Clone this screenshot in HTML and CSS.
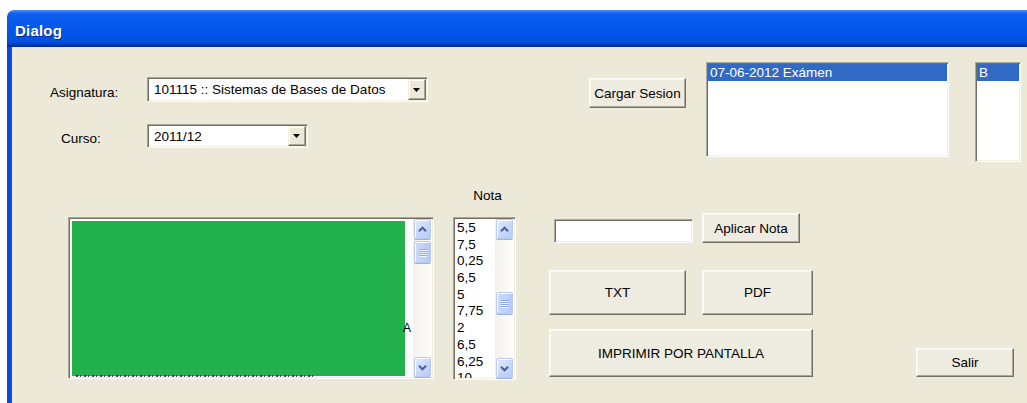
FILE: index.html
```html
<!DOCTYPE html>
<html lang="es">
<head>
<meta charset="utf-8">
<title>Dialog</title>
<link rel="stylesheet" href="styles.css">
</head>
<body>
<div class="window">
  <div class="titlebar"><span class="title">Dialog</span></div>
  <div class="client">
    <div class="top-row">
      <div class="form">
        <span class="label lbl-asig">Asignatura:</span>
        <div class="combo combo-asig">
          <span class="combo-text">101115 :: Sistemas de Bases de Datos</span>
          <span class="combo-btn"><svg width="8" height="5" viewBox="0 0 8 5"><path d="M0 0H7L3.5 4Z" fill="#000"/></svg></span>
        </div>
        <span class="label lbl-curso">Curso:</span>
        <div class="combo combo-curso">
          <span class="combo-text">2011/12</span>
          <span class="combo-btn"><svg width="8" height="5" viewBox="0 0 8 5"><path d="M0 0H7L3.5 4Z" fill="#000"/></svg></span>
        </div>
      </div>
      <button class="btn btn-cargar">Cargar Sesion</button>
      <div class="listbox list-sesiones">
        <div class="item selected">07-06-2012 Exámen</div>
      </div>
      <div class="listbox list-grupos">
        <div class="item selected">B</div>
      </div>
    </div>

    <div class="bottom-row">
      <div class="listbox list-alumnos">
        <div class="list-view alumnos">
          <div class="painted">
            <span class="stray">A</span>
            <span class="cut-row"></span>
          </div>
        </div>
        <div class="vscroll">
          <div class="sb-btn"><svg width="17" height="17" viewBox="0 0 17 17"><path d="M4.5 10.5L8.5 6.5L12.5 10.5" fill="none" stroke="#4D6185" stroke-width="2.2"/></svg></div>
          <div class="sb-track"><div class="sb-thumb" style="margin-top:2px"><i></i><i></i><i></i><i></i></div></div>
          <div class="sb-btn"><svg width="17" height="17" viewBox="0 0 17 17"><path d="M4.5 6.5L8.5 10.5L12.5 6.5" fill="none" stroke="#4D6185" stroke-width="2.2"/></svg></div>
        </div>
      </div>

      <div class="nota-col">
        <div class="nota-label">Nota</div>
        <div class="listbox list-notas">
          <div class="list-view notas">
            <div class="nota">5,5</div>
            <div class="nota">7,5</div>
            <div class="nota">0,25</div>
            <div class="nota">6,5</div>
            <div class="nota">5</div>
            <div class="nota">7,75</div>
            <div class="nota">2</div>
            <div class="nota">6,5</div>
            <div class="nota">6,25</div>
            <div class="nota">10</div>
          </div>
          <div class="vscroll">
            <div class="sb-btn"><svg width="17" height="17" viewBox="0 0 17 17"><path d="M4.5 10.5L8.5 6.5L12.5 10.5" fill="none" stroke="#4D6185" stroke-width="2.2"/></svg></div>
            <div class="sb-track"><div class="sb-thumb" style="margin-top:53px"><i></i><i></i><i></i><i></i></div></div>
            <div class="sb-btn"><svg width="17" height="17" viewBox="0 0 17 17"><path d="M4.5 6.5L8.5 10.5L12.5 6.5" fill="none" stroke="#4D6185" stroke-width="2.2"/></svg></div>
          </div>
        </div>
      </div>

      <div class="actions">
        <div class="action-row row-nota">
          <input class="edit" type="text">
          <button class="btn btn-aplicar">Aplicar Nota</button>
        </div>
        <div class="action-row row-export">
          <button class="btn btn-txt">TXT</button>
          <button class="btn btn-pdf">PDF</button>
        </div>
        <button class="btn btn-imprimir">IMPRIMIR POR PANTALLA</button>
      </div>

      <button class="btn btn-salir">Salir</button>
    </div>
  </div>
</div>
</body>
</html>
```
FILE: styles.css
```css
* { box-sizing: border-box; }

html, body {
  margin: 0;
  padding: 0;
  background: #fff;
}

body {
  font-family: "Liberation Sans", Arial, sans-serif;
  font-size: 13.5px;
  color: #000;
}

/* window frame */
.window {
  margin: 10px 0 0 7px;
  width: 1020px;
  height: 393px;
  display: flex;
  flex-direction: column;
}

.titlebar {
  height: 37px;
  flex: none;
  border-radius: 7px 0 0 0;
  background: linear-gradient(to bottom,
    #4A92F8 0px, #2573F4 2px, #0D60EF 4px, #0A5CEE 9px,
    #0457EC 20px, #0053E4 28px, #0050DE 32px,
    #0042C4 34px, #0031A6 36px, #00298F 37px);
  display: flex;
  align-items: center;
  padding: 3px 0 0 8px;
}

.title {
  color: #fff;
  font-weight: bold;
  font-size: 15px;
  letter-spacing: 0.2px;
  text-shadow: 1px 1px 0 #0A2C9A;
}

.client {
  flex: 1;
  background: #ECE9D8;
  border-left: 4px solid #0A48DA;
  box-shadow: inset 1px 0 0 #0757E8;
  overflow: hidden;
}

/* common controls */
.btn {
  font: inherit;
  color: #000;
  background: #EEEBE1;
  border: 1px solid;
  border-color: #FFFFFF #716F64 #716F64 #FFFFFF;
  box-shadow: inset -1px -1px 0 #ACA899, inset 1px 1px 0 #F8F7F2;
  padding: 0;
  flex: none;
}

.sunken {
  border: 1px solid;
}

.listbox,
.combo,
.edit {
  background: #fff;
  border: 1px solid;
  border-color: #ACA899 #FFFFFF #FFFFFF #ACA899;
  box-shadow: inset 1px 1px 0 #716F64, inset -1px -1px 0 #F1EFE2;
  padding: 1px;
  flex: none;
}

.item {
  height: 17px;
  line-height: 17px;
  padding-left: 2px;
  white-space: nowrap;
}

.item.selected {
  background: #316AC5;
  color: #fff;
}

/* top row */
.top-row {
  display: flex;
  align-items: flex-start;
  padding-top: 15px;
  height: 115px;
}

.form {
  display: grid;
  grid-template-columns: 97px auto;
  grid-template-rows: 25px 24px;
  row-gap: 22px;
  align-items: center;
  margin: 15px 0 0 39px;
}

.lbl-asig { padding-top: 5px; }
.lbl-curso { padding: 5px 0 0 11px; }

.combo {
  display: flex;
  align-items: stretch;
  height: 100%;
}

.combo-asig { width: 281px; }
.combo-curso { width: 161px; }

.combo-text {
  flex: 1;
  padding: 3px 0 0 5px;
  white-space: nowrap;
}

.combo-btn {
  width: 18px;
  flex: none;
  background: #ECE9D8;
  border: 1px solid;
  border-color: #F1EFE2 #716F64 #716F64 #F1EFE2;
  box-shadow: inset -1px -1px 0 #ACA899, inset 1px 1px 0 #fff;
  display: flex;
  align-items: center;
  justify-content: center;
  padding-top: 1px;
}

.btn-cargar {
  width: 97px;
  height: 30px;
  margin: 16px 0 0 161px;
}

.list-sesiones {
  width: 243px;
  height: 95px;
  margin-left: 20px;
}

.list-grupos {
  width: 46px;
  height: 100px;
  margin-left: 26px;
}

/* bottom row */
.bottom-row {
  display: flex;
  align-items: flex-start;
  padding-top: 18px;
}

.list-alumnos,
.list-notas {
  display: flex;
  padding: 1px;
}

.list-alumnos {
  width: 366px;
  height: 162px;
  margin: 37px 0 0 57px;
}

.list-view {
  flex: 1;
  overflow: hidden;
  background: #fff;
}

.alumnos {
  padding: 2px 8px 1px 2px;
  display: flex;
}

.painted {
  flex: 1;
  background: #22B14C;
  position: relative;
}

.stray {
  position: absolute;
  right: -6px;
  top: 101px;
  font-size: 12px;
  line-height: 12px;
}

.cut-row {
  position: absolute;
  left: 4px;
  bottom: -2px;
  width: 240px;
  height: 3px;
  background: repeating-linear-gradient(to right, #222 0 2px, transparent 2px 4px, #222 4px 5px, transparent 5px 8px);
  opacity: 0.8;
}

.nota-col {
  margin-left: 19px;
  width: 63px;
}

.nota-label {
  height: 37px;
  line-height: 32px;
  padding-left: 6px;
  text-align: center;
}

.list-notas {
  width: 63px;
  height: 163px;
}

.notas {
  padding: 1px 0 0 2px;
}

.nota {
  height: 16.7px;
  line-height: 16.7px;
}

/* XP scrollbar */
.vscroll {
  width: 19px;
  flex: none;
  display: flex;
  flex-direction: column;
  background: linear-gradient(to right, #F3F1EB, #FDFDFA);
  padding: 0 1px;
}

.sb-btn {
  height: 20px;
  flex: none;
  border: 1px solid #B9C9EF;
  border-radius: 2px;
  background: linear-gradient(135deg, #E2EAFE 0%, #C6D6FB 55%, #B6CAF7 100%);
  box-shadow: inset 1px 1px 0 #fff, 0 1px 0 #9DB1DC;
  display: flex;
  align-items: center;
  justify-content: center;
}

.sb-track {
  flex: 1;
}

.sb-thumb {
  height: 22px;
  border: 1px solid #B9C9EF;
  border-radius: 2px;
  background: linear-gradient(to right, #CADAFC, #C0D2FA 60%, #B4C8F6);
  box-shadow: inset 1px 1px 0 #fff, 0 1px 0 #9DB1DC;
  display: flex;
  flex-direction: column;
  align-items: center;
  justify-content: center;
  gap: 1px;
}

.sb-thumb i {
  display: block;
  width: 8px;
  height: 1px;
  background: #8DAAF0;
  box-shadow: 0 1px 0 #EEF4FE;
}

/* action buttons */
.actions {
  width: 264px;
  margin: 33px 0 0 33px;
  display: flex;
  flex-direction: column;
}

.action-row {
  display: flex;
  align-items: flex-end;
}

.row-nota { height: 30px; }

.edit {
  width: 139px;
  height: 24px;
  margin-left: 5px;
  font: inherit;
  outline: none;
}

.btn-aplicar {
  width: 98px;
  height: 30px;
  margin-left: 9px;
}

.row-export { margin-top: 27px; }

.btn-txt {
  width: 137px;
  height: 45px;
}

.btn-pdf {
  width: 111px;
  height: 45px;
  margin-left: 16px;
}

.btn-imprimir {
  width: 264px;
  height: 48px;
  margin-top: 14px;
}

.btn-salir {
  width: 98px;
  height: 29px;
  margin: 168px 0 0 103px;
}
```
